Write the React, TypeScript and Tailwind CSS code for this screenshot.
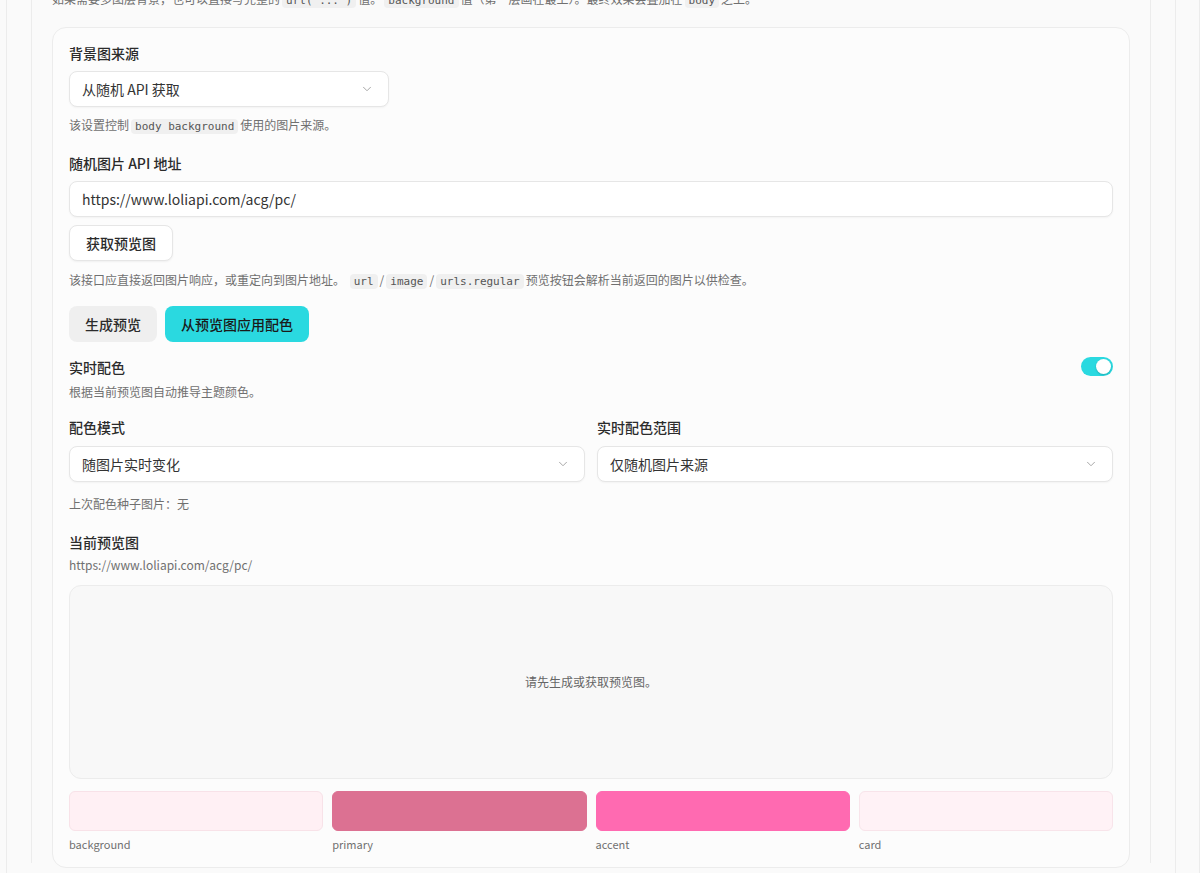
import React from 'react'
import { ChevronDown } from 'lucide-react'

const font = { fontFamily: '"Noto Sans CJK SC", "Noto Sans", sans-serif' }

function Code({ children }: { children: React.ReactNode }) {
  return (
    <code className="mx-[2px] rounded-[4px] bg-[#f0f0f0] px-[4px] py-[1px] font-['DejaVu_Sans_Mono',monospace] text-[11px] text-[#555]">
      {children}
    </code>
  )
}

function Select({ value, className = '' }: { value: string; className?: string }) {
  return (
    <div className={`flex h-[36px] items-center justify-between rounded-[8px] border border-[#e6e6e6] bg-white pl-[12px] pr-[14px] text-[14px] text-[#333] shadow-[0_1px_2px_rgba(0,0,0,0.04)] ${className}`}>
      <span>{value}</span>
      <ChevronDown className="h-[14px] w-[14px] text-[#9a9a9a]" strokeWidth={1.5} />
    </div>
  )
}

function Label({ children }: { children: React.ReactNode }) {
  return <div className="text-[14px] font-medium leading-[20px] text-[#2b2b2b]">{children}</div>
}

function Help({ children, className = '' }: { children: React.ReactNode; className?: string }) {
  return <div className={`text-[12px] leading-[18px] text-[#707070] ${className}`}>{children}</div>
}

const swatches = [
  { name: 'background', color: '#fff0f4', border: 'border-[#f8e2e8]' },
  { name: 'primary', color: '#dc7192', border: 'border-[#dc7192]' },
  { name: 'accent', color: '#ff6ab1', border: 'border-[#ff6ab1]' },
  { name: 'card', color: '#fff2f6', border: 'border-[#f8e4ea]' },
]

export default function App() {
  return (
    <div className="h-[873px] overflow-hidden bg-[#fafafa]" style={font}>
      <div className="flex h-full">
        <div className="ml-[6px] h-full w-[1170px] border-x border-[#ececec] bg-[#fafafa] px-[24px]">
          <div className="h-full border-x border-[#ececec] px-[20px]">
            {/* intro line, scrolled partly out of view */}
            <div className="-mt-[10px] h-[16px] overflow-visible whitespace-nowrap text-[12px] leading-[18px] text-[#707070]">
              如果需要多图层背景，也可以直接写完整的<Code>url( ... )</Code>值。<Code>background</Code>值（第一层画在最上）。最终效果会叠加在<Code>body</Code>之上。
            </div>

            <div className="mt-[21px] rounded-[14px] border border-[#ececec] bg-[#fcfcfc] px-[16px] pt-[15px] pb-[14px]">
              <Label>背景图来源</Label>
              <Select value="从随机 API 获取" className="mt-[8px] w-[320px]" />
              <Help className="mt-[9px]">
                该设置控制<Code>body background</Code>使用的图片来源。
              </Help>

              <div className="mt-[17px]">
                <Label>随机图片 API 地址</Label>
              </div>
              <div className="mt-[8px] flex h-[36px] items-center rounded-[8px] border border-[#e6e6e6] bg-white pl-[12px] text-[14px] text-[#333] shadow-[0_1px_2px_rgba(0,0,0,0.04)]">
                https://www.loliapi.com/acg/pc/
              </div>
              <button className="mt-[8px] h-[36px] w-[104px] rounded-[8px] border border-[#e6e6e6] bg-white text-[14px] font-medium text-[#2b2b2b] shadow-[0_1px_2px_rgba(0,0,0,0.05)]">
                获取预览图
              </button>
              <Help className="mt-[10px]">
                该接口应直接返回图片响应，或重定向到图片地址。 <Code>url</Code>/<Code>image</Code>/<Code>urls.regular</Code>预览按钮会解析当前返回的图片以供检查。
              </Help>

              <div className="mt-[15px] flex gap-[8px]">
                <button className="h-[36px] w-[88px] rounded-[8px] bg-[#efefef] text-[14px] font-medium text-[#2b2b2b]">
                  生成预览
                </button>
                <button className="h-[36px] w-[144px] rounded-[8px] bg-[#2ad9e0] text-[14px] font-medium text-[#1a1a1a]">
                  从预览图应用配色
                </button>
              </div>

              <div className="mt-[15px] flex items-start justify-between">
                <div>
                  <Label>实时配色</Label>
                  <Help className="mt-[6px]">根据当前预览图自动推导主题颜色。</Help>
                </div>
                <div className="flex h-[19px] w-[32px] items-center justify-end rounded-full bg-[#2ad9e0] px-[2px]">
                  <div className="h-[15px] w-[15px] rounded-full bg-white shadow-[0_1px_2px_rgba(0,0,0,0.2)]" />
                </div>
              </div>

              <div className="mt-[16px] grid grid-cols-2 gap-[12px]">
                <div>
                  <Label>配色模式</Label>
                  <Select value="随图片实时变化" className="mt-[9px]" />
                </div>
                <div>
                  <Label>实时配色范围</Label>
                  <Select value="仅随机图片来源" className="mt-[9px]" />
                </div>
              </div>
              <Help className="mt-[13px]">上次配色种子图片：无</Help>

              <div className="mt-[19px]">
                <Label>当前预览图</Label>
              </div>
              <Help className="mt-[4px]">https://www.loliapi.com/acg/pc/</Help>
              <div className="mt-[11px] flex h-[194px] items-center justify-center rounded-[12px] border border-[#ececec] bg-[#f8f8f8] text-[12px] text-[#666]">
                请先生成或获取预览图。
              </div>

              <div className="mt-[12px] grid grid-cols-4 gap-[9px]">
                {swatches.map((s) => (
                  <div key={s.name}>
                    <div className={`h-[40px] rounded-[6px] border ${s.border}`} style={{ backgroundColor: s.color }} />
                    <div className="mt-[4px] text-[11px] leading-[18px] text-[#707070]">{s.name}</div>
                  </div>
                ))}
              </div>
            </div>
          </div>
        </div>
        <div className="flex-1" />
        <div className="h-full w-px bg-[#ececec]" />
      </div>
    </div>
  )
}
